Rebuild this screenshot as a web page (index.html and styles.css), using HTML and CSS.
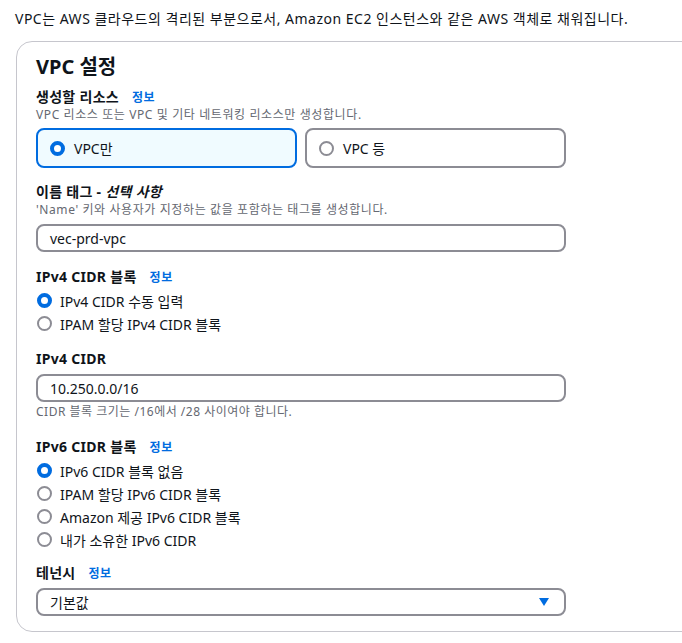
FILE: index.html
```html
<!DOCTYPE html>
<html lang="ko">
<head>
    <meta charset="UTF-8">
    <meta name="viewport" content="width=device-width, initial-scale=1.0">
    <title>VPC 생성</title>
    <link rel="stylesheet" href="styles.css">
</head>
<body>

<p class="intro">VPC는 AWS 클라우드의 격리된 부분으로서, Amazon EC2 인스턴스와 같은 AWS 객체로 채워집니다.</p>

<div class="panel">
    <h2>VPC 설정</h2>

    <div class="field first">
        <div class="label">생성할 리소스 <a href="#" class="info">정보</a></div>
        <div class="desc">VPC 리소스 또는 VPC 및 기타 네트워킹 리소스만 생성합니다.</div>
        <div class="tiles">
            <div class="tile selected"><span class="radio on"></span>VPC만</div>
            <div class="tile"><span class="radio"></span>VPC 등</div>
        </div>
    </div>

    <div class="field">
        <div class="label">이름 태그 - <i>선택 사항</i></div>
        <div class="desc">'Name' 키와 사용자가 지정하는 값을 포함하는 태그를 생성합니다.</div>
        <div class="input">vec-prd-vpc</div>
    </div>

    <div class="field f3">
        <div class="label">IPv4 CIDR 블록 <a href="#" class="info">정보</a></div>
        <ul class="options">
            <li><span class="radio on"></span>IPv4 CIDR 수동 입력</li>
            <li><span class="radio"></span>IPAM 할당 IPv4 CIDR 블록</li>
        </ul>
    </div>

    <div class="field">
        <div class="label">IPv4 CIDR</div>
        <div class="input">10.250.0.0/16</div>
        <div class="hint">CIDR 블록 크기는 /16에서 /28 사이여야 합니다.</div>
    </div>

    <div class="field f5">
        <div class="label">IPv6 CIDR 블록 <a href="#" class="info">정보</a></div>
        <ul class="options">
            <li><span class="radio on"></span>IPv6 CIDR 블록 없음</li>
            <li><span class="radio"></span>IPAM 할당 IPv6 CIDR 블록</li>
            <li><span class="radio"></span>Amazon 제공 IPv6 CIDR 블록</li>
            <li><span class="radio"></span>내가 소유한 IPv6 CIDR</li>
        </ul>
    </div>

    <div class="field f6">
        <div class="label">테넌시 <a href="#" class="info">정보</a></div>
        <div class="input select">기본값
            <svg class="caret" width="10" height="8" viewBox="0 0 10 8"><path d="M0 0H10L5 8Z" fill="#006ce0"/></svg>
        </div>
    </div>
</div>

</body>
</html>
```

FILE: styles.css
```css
body {
    font-family: "Noto Sans", "Noto Sans CJK KR", sans-serif;
    margin: 0;
    padding: 0 0 0 16px;
    color: #0f141a;
    background: #fff;
    overflow: hidden;
    font-size: 14px;
}
.intro {
    margin: 0 0 0 -1px;
    padding-top: 9px;
    height: 20px;
    line-height: 20px;
    letter-spacing: 0.5px;
}
.panel {
    margin-top: 12px;
    width: 720px;
    border: 1px solid #c6c6cd;
    border-radius: 16px;
    padding: 13px 0 15px 19px;
}
h2 {
    margin: 0;
    font-size: 20px;
    height: 24px;
    line-height: 24px;
    font-weight: bold;
}
.field {
    width: 530px;
    margin-top: 14px;
}
.field.first { margin-top: 8px; }
.field.f3 { margin-top: 15px; }
.field.f5 { margin-top: 17px; }
.field.f6 { margin-top: 12px; }
.label {
    font-weight: bold;
    height: 20px;
    line-height: 20px;
    letter-spacing: 0.3px;
}
.label i {
    font-style: italic;
}
.info {
    color: #006ce0;
    text-decoration: none;
    font-size: 12px;
    margin-left: 9px;
    letter-spacing: 0.5px;
}
.desc, .hint {
    color: #656871;
    font-size: 12px;
    height: 16px;
    line-height: 16px;
    letter-spacing: 0.6px;
}
.hint {
    margin-top: 2px;
    letter-spacing: 0.5px;
}
.tiles {
    display: grid;
    grid-template-columns: 1fr 1fr;
    gap: 8px;
    margin-top: 5px;
}
.tile {
    height: 40px;
    box-sizing: border-box;
    border: 2px solid #8c8c94;
    border-radius: 8px;
    display: flex;
    align-items: center;
    padding-left: 12px;
}
.tile.selected {
    border-color: #006ce0;
    background: #f0fbff;
}
.tile .radio { margin-right: 9px; }
.radio {
    display: inline-block;
    box-sizing: border-box;
    width: 15px;
    height: 15px;
    border-radius: 50%;
    border: 2px solid #8c8c94;
    background: #fff;
    flex: none;
}
.radio.on {
    border: 4px solid #006ce0;
}
.input {
    margin-top: 6px;
    height: 28px;
    box-sizing: border-box;
    border: 2px solid #8c8c94;
    border-radius: 8px;
    padding-left: 12px;
    display: flex;
    align-items: center;
}
.field .label + .input { margin-top: 5px; }
.field .desc + .input { margin-top: 6px; }
.select {
    justify-content: space-between;
    padding-right: 15px;
}
.options {
    list-style: none;
    margin: 2px 0 0;
    padding: 0;
}
.options li {
    height: 23px;
    display: flex;
    align-items: center;
}
.options .radio {
    margin-left: 1px;
    margin-right: 8px;
}
```
